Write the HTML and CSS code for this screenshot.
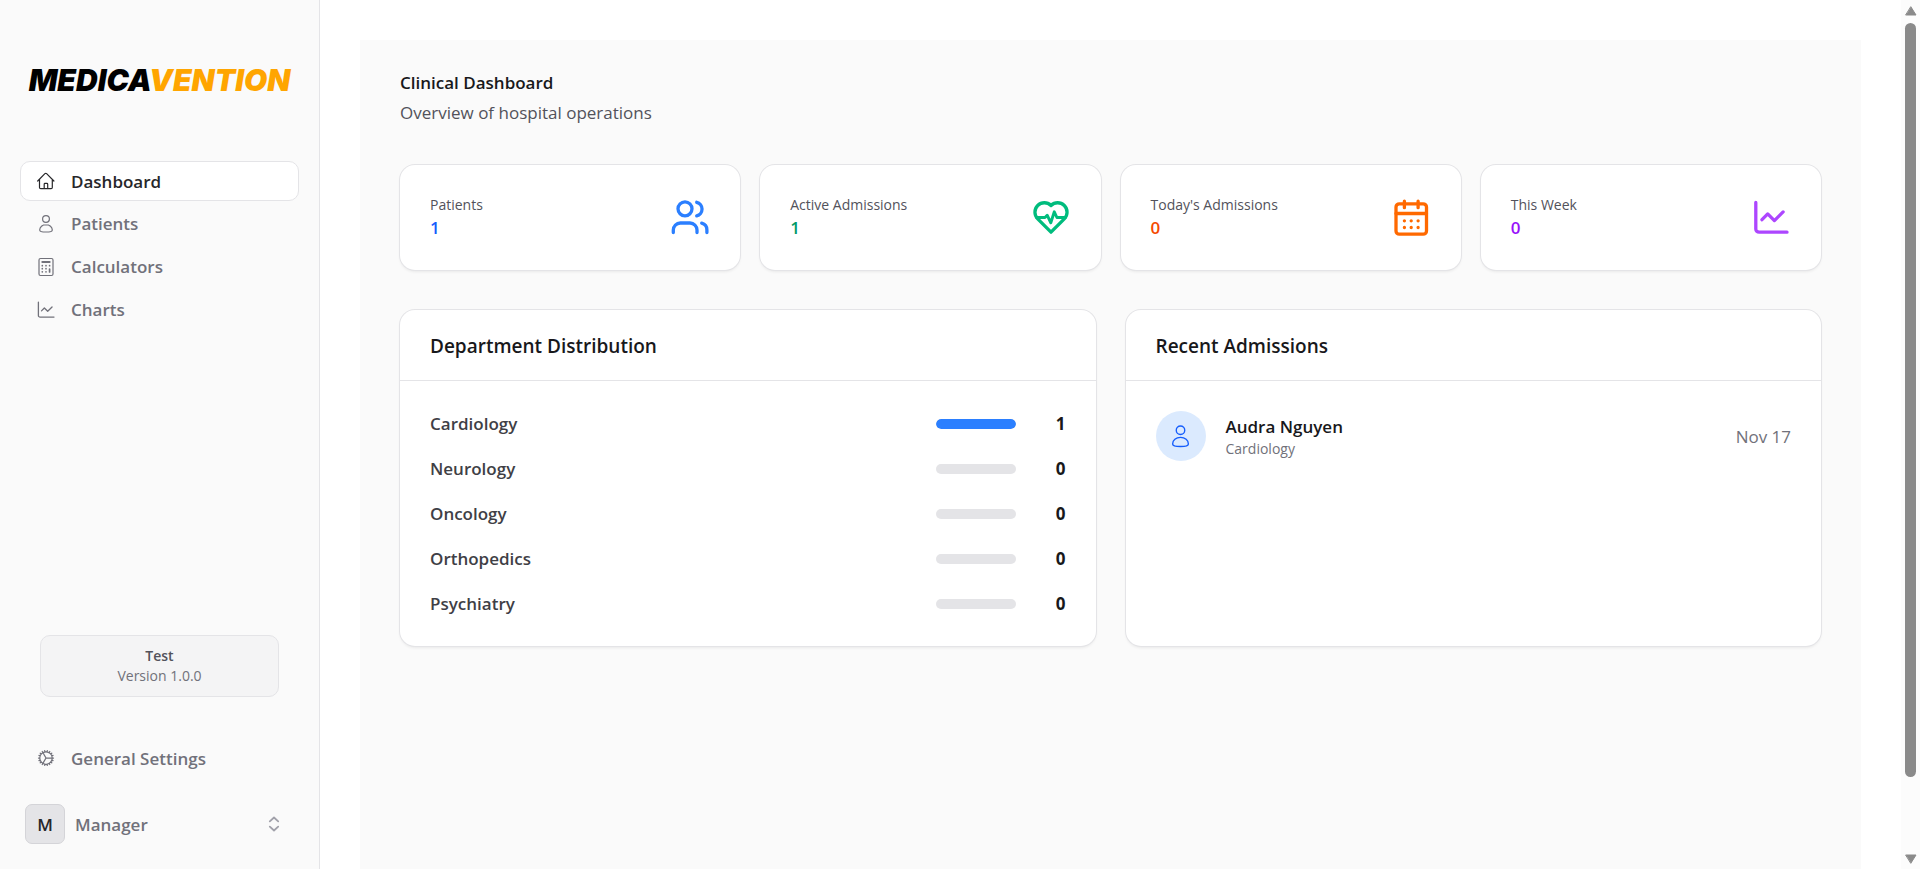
FILE: index.html
```
<!DOCTYPE html>
<html lang="en">
<head>
<meta charset="utf-8">
<meta name="viewport" content="width=device-width, initial-scale=1">
<title>Medicavention</title>
<link rel="stylesheet" href="styles.css">
</head>
<body>
<svg class="defs" aria-hidden="true">
  <symbol id="i-person" viewBox="0 0 20 20"><circle cx="10" cy="5" r="3.4"/><path d="M10 10.7c-3.6 0-6.3 2.3-6.3 5.2 0 1.5 2.8 2.1 6.3 2.1s6.3-.6 6.3-2.1c0-2.9-2.7-5.2-6.3-5.2z"/></symbol>
  <symbol id="i-chart" viewBox="0 0 40 40"><path d="M4.8 4.5v26.4a3.3 3.3 0 0 0 3.3 3.3H36M11 21.7l5.7-5.8 6.7 6.7 8.7-8.7"/></symbol>
</svg>
<div class="app">
  <aside class="sidebar">
    <a class="logo" href="#">MEDICA<span class="logo-accent">VENTION</span></a>
    <nav class="nav">
      <a class="nav-item active" href="#"><svg class="icon" viewBox="0 0 20 20"><path d="M1.7 10l7.2-7.3a1.2 1.2 0 0 1 1.7 0L17.9 10M3.5 8.3v8.2a1.2 1.2 0 0 0 1.2 1.2h10.4a1.2 1.2 0 0 0 1.2-1.2V8.3M8.2 17.5v-4.3a.8.8 0 0 1 .8-.8h1.9a.8.8 0 0 1 .8.8v4.3"/></svg>Dashboard</a>
      <a class="nav-item" href="#"><svg class="icon"><use href="#i-person"/></svg>Patients</a>
      <a class="nav-item" href="#"><svg class="icon" viewBox="0 0 20 20"><rect x="3" y="1.5" width="14" height="17" rx="1.5"/><path d="M6.3 5h7.4" stroke-width="1.9"/><path d="M6.3 8.7h.01M10 8.7h.01M13.6 8.7h.01M6.3 11.7h.01M10 11.7h.01M6.3 14.8h.01M10 14.8h.01M13.6 12v3" stroke-width="1.7"/></svg>Calculators</a>
      <a class="nav-item" href="#"><svg class="icon icon-chart"><use href="#i-chart"/></svg>Charts</a>
    </nav>
    <div class="version"><strong class="version-name">Test</strong><span>Version 1.0.0</span></div>
    <a class="nav-item" href="#"><svg class="icon icon-gear" viewBox="0 0 24 24"><path d="M4.5 12a7.5 7.5 0 0 0 15 0m-15 0a7.5 7.5 0 1 1 15 0m-15 0H3m16.5 0H21m-1.5 0H12m-8.457 3.077 1.41-.513m14.095-5.13 1.41-.513M5.106 17.785l1.15-.964m11.49-9.642 1.149-.964M7.501 19.795l.75-1.3m7.5-12.99.75-1.3m-6.063 16.658.26-1.477m2.605-14.772.26-1.477m0 17.726-.26-1.477M10.698 4.614l-.26-1.477M16.5 19.794l-.75-1.299M7.5 4.205 12 12m6.894 5.785-1.149-.964M6.256 7.178l-1.15-.964m15.352 8.864-1.41-.513M4.954 9.435l-1.41-.514M12.002 12l-3.75 6.495"/></svg>General Settings</a>
    <button class="account" type="button">
      <span class="account-badge">M</span>
      <span class="account-name">Manager</span>
      <svg class="icon icon-sort" viewBox="0 0 20 20"><path d="M5.8 7.3 10 3.5l4.2 3.8M5.8 12.7l4.2 3.8 4.2-3.8"/></svg>
    </button>
  </aside>

  <main class="main">
    <div class="panel">
      <header class="page-head">
        <h1 class="page-title">Clinical Dashboard</h1>
        <p class="page-sub">Overview of hospital operations</p>
      </header>

      <section class="stats">
        <article class="card stat blue">
          <div><p class="stat-label">Patients</p><p class="stat-value">1</p></div>
          <svg class="stat-icon" viewBox="0 0 40 40"><circle cx="15" cy="10.8" r="7"/><path d="M3.3 34.5V32a7 7 0 0 1 7-7H20a7 7 0 0 1 7 7v2.5M26.7 4.3a7 7 0 0 1 0 13.6M31.7 25.2a7 7 0 0 1 5.2 6.8v2.5"/></svg>
        </article>
        <article class="card stat green">
          <div><p class="stat-label">Active Admissions</p><p class="stat-value">1</p></div>
          <svg class="stat-icon" viewBox="0 0 40 40"><path d="M20 34.2 6.7 20.8A9.4 9.4 0 0 1 20 7.5a9.4 9.4 0 0 1 13.3 13.3z"/><path d="M5.5 19.5H14l2.200-2.300 3.600 7.600 3.500-11 2.600 5.700h8.600" stroke-width="2.9"/></svg>
        </article>
        <article class="card stat orange">
          <div><p class="stat-label">Today's Admissions</p><p class="stat-value">0</p></div>
          <svg class="stat-icon" viewBox="0 0 40 40"><rect x="5" y="5.8" width="30.5" height="30.4" rx="3.3"/><path d="M5 15.5h30.5M13.4 3.2v6.5M27.1 3.2v6.5M13.4 22.8h.01M20.2 22.8h.01M27.1 22.8h.01M13.4 29.5h.01M20.2 29.5h.01M27.1 29.5h.01"/></svg>
        </article>
        <article class="card stat purple">
          <div><p class="stat-label">This Week</p><p class="stat-value">0</p></div>
          <svg class="stat-icon"><use href="#i-chart"/></svg>
        </article>
      </section>

      <section class="details">
        <article class="card">
          <h2 class="card-title">Department Distribution</h2>
          <ul class="card-body departments">
            <li class="dept"><span class="dept-name">Cardiology</span><span class="bar"><span class="bar-fill" style="width:100%"></span></span><span class="dept-count">1</span></li>
            <li class="dept"><span class="dept-name">Neurology</span><span class="bar"></span><span class="dept-count">0</span></li>
            <li class="dept"><span class="dept-name">Oncology</span><span class="bar"></span><span class="dept-count">0</span></li>
            <li class="dept"><span class="dept-name">Orthopedics</span><span class="bar"></span><span class="dept-count">0</span></li>
            <li class="dept"><span class="dept-name">Psychiatry</span><span class="bar"></span><span class="dept-count">0</span></li>
          </ul>
        </article>
        <article class="card">
          <h2 class="card-title">Recent Admissions</h2>
          <ul class="card-body">
            <li class="admission">
              <span class="avatar"><svg class="avatar-icon"><use href="#i-person"/></svg></span>
              <div class="who"><p class="who-name">Audra Nguyen</p><p class="who-dept">Cardiology</p></div>
              <time class="date">Nov 17</time>
            </li>
          </ul>
        </article>
      </section>
    </div>
  </main>

  <div class="scrollbar" aria-hidden="true">
    <svg class="arrow" viewBox="0 0 12 10"><path d="M6 1 11 9H1z"/></svg>
    <div class="track"><div class="thumb"></div></div>
    <svg class="arrow" viewBox="0 0 12 10"><path d="M6 9 11 1H1z"/></svg>
  </div>
</div>
</body>
</html>
```
FILE: styles.css
```
* { box-sizing: border-box; }
body {
  margin: 0;
  background: #fff;
  color: #18181b;
  font: 400 17px/25px "Open Sans", "Noto Sans", sans-serif;
}
h1, h2, p, ul { margin: 0; padding: 0; }
ul { list-style: none; }
a { color: inherit; text-decoration: none; }
svg {
  fill: none;
  stroke: currentColor;
  stroke-linecap: round;
  stroke-linejoin: round;
  flex: none;
}
.defs { display: none; }

.app { display: flex; height: 100vh; overflow: hidden; }

.sidebar {
  width: 320px;
  flex: none;
  display: flex;
  flex-direction: column;
  padding: 60px 20px 20px;
  background: #fafafa;
  border-right: 1px solid #e4e4e7;
}
.logo {
  font: italic 900 30px/40px Inter, sans-serif;
  color: #000;
  text-align: center;
  white-space: nowrap;
}
.logo-accent { color: #ffa500; }
.nav {
  display: flex;
  flex-direction: column;
  gap: 2px;
  margin-top: 61px;
}
.nav-item {
  display: flex;
  align-items: center;
  gap: 15px;
  height: 40px;
  padding: 0 15px;
  border: 1px solid transparent;
  border-radius: 10px;
  color: #71717a;
  font-weight: 600;
}
.nav-item.active {
  background: #fff;
  border-color: #e4e4e7;
  color: #27272a;
}
.nav .nav-item + .nav-item { height: 41px; }
.icon { width: 20px; height: 20px; stroke-width: 1.2; }
.icon-chart { stroke-width: 2.6; }
.icon-gear { stroke-width: 1.5; }
.icon-sort { stroke-width: 1.8; color: #a1a1aa; }
.version {
  display: flex;
  flex-direction: column;
  margin: auto 20px 41px;
  padding: 10px;
  background: #f4f4f5;
  border: 1px solid #e4e4e7;
  border-radius: 10px;
  font-size: 14px;
  line-height: 20px;
  text-align: center;
  color: #71717a;
}
.version-name { font-weight: 600; color: #52525b; }
.account {
  display: flex;
  align-items: center;
  gap: 10px;
  margin-top: 21px;
  padding: 5px 15px 5px 5px;
  background: none;
  border: 0;
  font: inherit;
  font-weight: 600;
  color: #71717a;
  text-align: left;
}
.account-badge {
  width: 40px;
  height: 40px;
  border: 1px solid #d4d4d8;
  border-radius: 7px;
  background: #e4e4e7;
  color: #27272a;
  line-height: 40px;
  text-align: center;
}
.account-name { flex: 1; }

.main { flex: 1; min-width: 0; padding: 40px 40px 0; display: flex; }
.panel { flex: 1; min-width: 0; padding: 30px 40px; background: #fafafa; }
.page-title { font-size: 17px; font-weight: 600; line-height: 25px; }
.page-sub { margin-top: 5px; color: #52525b; }

.card {
  background: #fff;
  border-radius: 15px;
  box-shadow: 0 0 0 1px #e4e4e7, 0 2px 3px rgba(0, 0, 0, .07);
}
.stats {
  display: grid;
  grid-template-columns: repeat(4, 1fr);
  gap: 20px;
  margin-top: 40px;
}
.stat {
  display: flex;
  align-items: center;
  justify-content: space-between;
  padding: 30px;
}
.stat-label { font-size: 14px; line-height: 20px; color: #52525b; }
.stat-value { font-weight: 600; }
.stat-icon { width: 40px; height: 40px; stroke-width: 3.3; }
.blue .stat-value { color: #155dfc; }
.blue .stat-icon { color: #2b7fff; }
.green .stat-value { color: #009966; }
.green .stat-icon { color: #00bc7d; }
.orange .stat-value { color: #f54900; }
.orange .stat-icon { color: #ff6900; }
.purple .stat-value { color: #9810fa; }
.purple .stat-icon { color: #ad46ff; }

.details {
  display: grid;
  grid-template-columns: repeat(2, 1fr);
  gap: 30px;
  margin-top: 40px;
}
.card-title {
  padding: 21px 30px 19px;
  border-bottom: 1px solid #e4e4e7;
  font-size: 19px;
  font-weight: 600;
  line-height: 30px;
}
.card-body { padding: 30px; }
.departments { display: grid; gap: 20px; }
.dept { display: flex; align-items: center; gap: 20px; }
.dept-name { flex: 1; font-weight: 600; color: #3f3f46; }
.bar {
  width: 80px;
  height: 10px;
  border-radius: 5px;
  background: #e4e4e7;
  overflow: hidden;
}
.bar-fill { display: block; height: 100%; border-radius: 5px; background: #2b7fff; }
.dept-count { width: 30px; font-weight: 700; text-align: right; }
.admission { display: flex; align-items: center; gap: 20px; }
.avatar {
  display: grid;
  place-items: center;
  width: 50px;
  height: 50px;
  border-radius: 50%;
  background: #dbeafe;
  color: #155dfc;
}
.avatar-icon { width: 25px; height: 25px; stroke-width: 1.1; }
.who { flex: 1; }
.who-name { font-weight: 600; }
.who-dept { font-size: 14px; line-height: 20px; color: #71717a; }
.date { color: #71717a; }

.scrollbar {
  width: 19px;
  flex: none;
  display: flex;
  flex-direction: column;
  align-items: center;
  gap: 7px;
  padding: 6px 0 5px;
  background: #fcfcfc;
}
.arrow { width: 12px; height: 10px; fill: #8a8a8a; stroke: #8a8a8a; }
.track { flex: 1; }
.thumb { width: 11px; height: 91.5%; border-radius: 6px; background: #8a8a8a; }
```
